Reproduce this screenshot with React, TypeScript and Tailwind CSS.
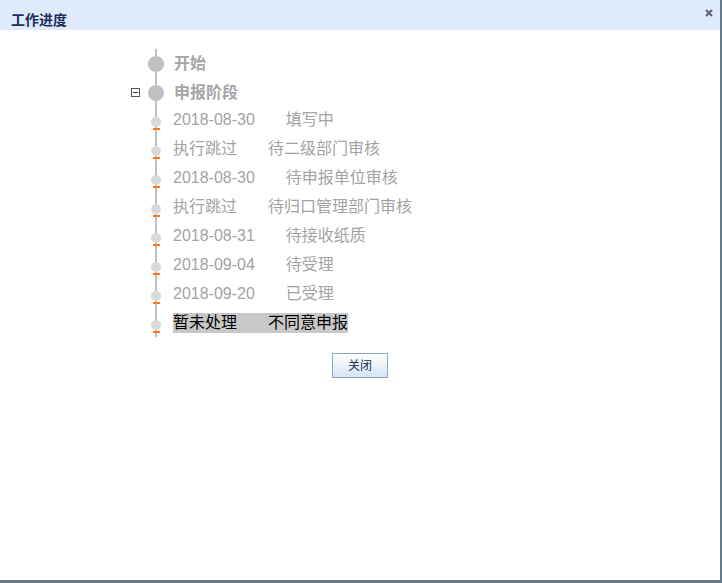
import React from "react"

const font = { fontFamily: '"Liberation Sans", "Noto Sans CJK SC", sans-serif' }

type Step = { left: string; right: string; current?: boolean }

const steps: Step[] = [
  { left: "2018-08-30", right: "填写中" },
  { left: "执行跳过", right: "待二级部门审核" },
  { left: "2018-08-30", right: "待申报单位审核" },
  { left: "执行跳过", right: "待归口管理部门审核" },
  { left: "2018-08-31", right: "待接收纸质" },
  { left: "2018-09-04", right: "待受理" },
  { left: "2018-09-20", right: "已受理" },
  { left: "暂未处理", right: "不同意申报", current: true },
]

function StageRow({ title, toggle }: { title: string; toggle?: boolean }) {
  return (
    <div className="flex h-[29px]">
      <div className="w-[17px] flex items-center">
        {toggle && (
          <div className="w-[9px] h-[9px] border border-[#555] bg-white flex items-center justify-center">
            <div className="w-[5px] h-px bg-[#333]" />
          </div>
        )}
      </div>
      <div className="w-[16px] flex flex-col items-center">
        <div className="h-[7px] w-[2px] bg-[#c0c0c0]" />
        <div className="w-[16px] h-[16px] rounded-full bg-[#c0c0c0]" />
        <div className="flex-1 w-[2px] bg-[#c0c0c0]" />
      </div>
      <div className="ml-[10px] pt-[5px] text-[16px] leading-[20px] font-bold text-[#a6a6a6]">{title}</div>
    </div>
  )
}

function StepRow({ step, last }: { step: Step; last?: boolean }) {
  return (
    <div className="flex h-[29px]">
      <div className="w-[17px]" />
      <div className="w-[16px] flex flex-col items-center">
        <div className="h-[10px] w-[2px] bg-[#c0c0c0]" />
        <div className="w-[10px] h-[10px] rounded-full bg-[#d9d9d9]" />
        <div className="h-px w-[2px] bg-[#c0c0c0]" />
        <div className="h-[2px] w-[7px] bg-[#ff7a1a]" />
        <div className={last ? "h-[4px] w-[2px] bg-[#c0c0c0]" : "flex-1 w-[2px] bg-[#c0c0c0]"} />
      </div>
      <div className="ml-[9px] pt-[3px]">
        {step.current ? (
          <div className="flex h-[20px] leading-[20px] text-[16px] bg-[#c8c8c8] text-black">
            <span>{step.left}</span>
            <span className="ml-[31px]">{step.right}</span>
          </div>
        ) : (
          <div className="flex h-[20px] leading-[20px] text-[16px] text-[#a3a3a3]">
            <span>{step.left}</span>
            <span className="ml-[31px]">{step.right}</span>
          </div>
        )}
      </div>
    </div>
  )
}

export default function App() {
  return (
    <div className="w-[722px] h-[583px] bg-white border-r-2 border-b-[3px] border-[#667a8e] flex flex-col" style={font}>
      <div className="h-[30px] bg-[#dfeafb] flex items-start justify-between shrink-0">
        <div className="pl-[11px] pt-[10px] text-[14px] leading-[20px] font-bold text-[#1f2d5c]">工作进度</div>
        <svg width="8" height="8" viewBox="0 0 8 8" className="mt-[9px] mr-[7px]">
          <path d="M1 1 L7 7 M7 1 L1 7" stroke="#5a6272" strokeWidth="2" />
        </svg>
      </div>

      <div className="pt-[19px] pl-[131px]">
        <StageRow title="开始" />
        <StageRow title="申报阶段" toggle />
        {steps.map((s, i) => (
          <StepRow key={i} step={s} last={i === steps.length - 1} />
        ))}
      </div>

      <div className="flex justify-center mt-[14px]">
        <button className="w-[56px] h-[25px] border border-[#8ea6c6] bg-gradient-to-b from-white to-[#d6e4f5] text-[12px] text-[#1e2d4c] leading-none">
          关闭
        </button>
      </div>
    </div>
  )
}
